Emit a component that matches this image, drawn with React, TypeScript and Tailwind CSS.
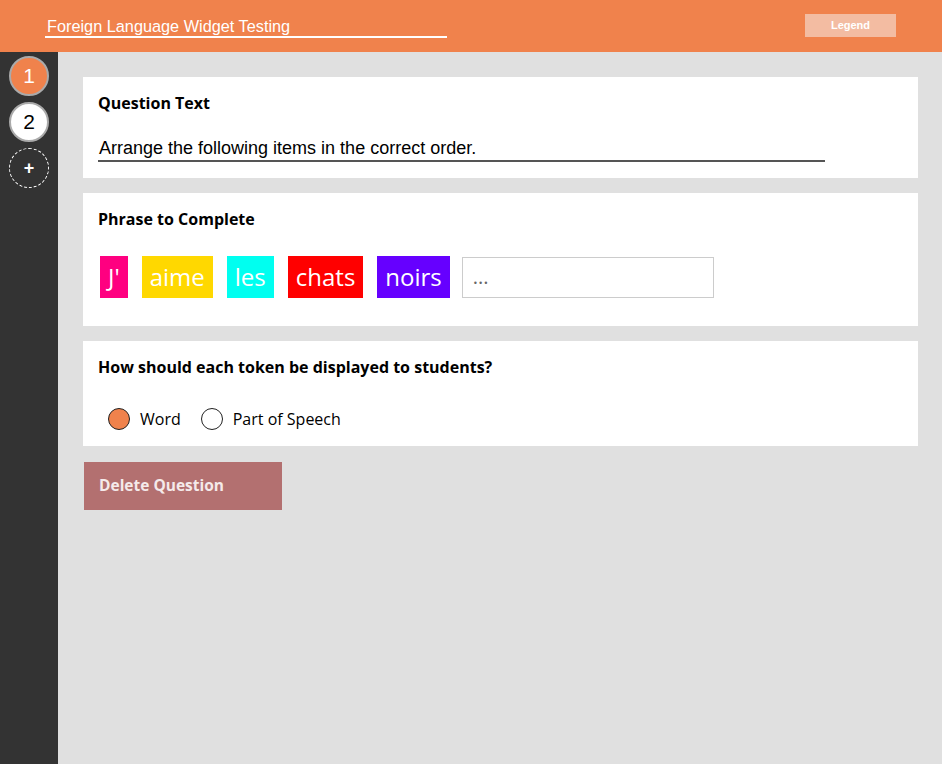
import { useState } from "react";

const TOKENS = [
  { text: "J'", color: "bg-[#ff0080]" },
  { text: "aime", color: "bg-[#ffd800]" },
  { text: "les", color: "bg-[#00fff0]" },
  { text: "chats", color: "bg-[#ff0000]" },
  { text: "noirs", color: "bg-[#6600ff]" },
];

const OPTIONS = ["Word", "Part of Speech"];

export default function App() {
  const [active, setActive] = useState(1);
  const [display, setDisplay] = useState("Word");

  return (
    <div className="flex flex-col h-[764px] bg-[#e0e0e0] font-['Open_Sans',sans-serif]">
      {/* Header */}
      <header className="flex items-center justify-between h-[52px] bg-[#f0824c] pl-[45px] pr-[46px] shrink-0">
        <div className="w-[402px] h-[22px] border-b-2 border-white mt-[1px] font-['Liberation_Sans',Arial,sans-serif] text-[16.3px] leading-[20px] text-white pl-[2px]">
          Foreign Language Widget Testing
        </div>
        <button className="w-[91px] h-[23px] bg-[#f3bca2] text-white text-[11px] font-bold font-['Liberation_Sans',Arial,sans-serif] mt-[-1px]">
          Legend
        </button>
      </header>

      <div className="flex flex-1">
        {/* Sidebar */}
        <aside className="w-[58px] bg-[#333333] flex flex-col items-center gap-[6px] pt-[4px] shrink-0">
          {[1, 2].map((n) => (
            <button
              key={n}
              onClick={() => setActive(n)}
              className={`w-[40px] h-[40px] rounded-full border-2 border-[#aaaaaa] flex items-center justify-center text-[21px] font-['Liberation_Sans',Arial,sans-serif] ${
                active === n ? "bg-[#f0824c] text-white" : "bg-white text-black"
              }`}
            >
              {n}
            </button>
          ))}
          <button className="w-[40px] h-[40px] rounded-full border border-dashed border-white flex items-center justify-center text-white text-[18px] font-bold font-['Liberation_Sans',Arial,sans-serif]">
            +
          </button>
        </aside>

        {/* Main */}
        <main className="flex-1 pl-[25px] pr-[24px] pt-[25px] flex flex-col gap-[15px]">
          <section className="bg-white px-[15px] pt-[15px] pb-[16px]">
            <h2 className="text-[16px] leading-[22px] font-bold text-black">Question Text</h2>
            <div className="mt-[23px] w-[727px] border-b-2 border-[#555555] font-['Liberation_Sans',Arial,sans-serif] text-[18px] leading-[22px] text-black pl-[1px] pb-[1px]">
              Arrange the following items in the correct order.
            </div>
          </section>

          <section className="bg-white px-[15px] pt-[15px] pb-[28px]">
            <h2 className="text-[16px] leading-[22px] font-bold text-black">Phrase to Complete</h2>
            <div className="mt-[26px] flex items-center gap-[14px] pl-[2px]">
              {TOKENS.map((t) => (
                <span
                  key={t.text}
                  className={`${t.color} h-[42px] px-[8px] flex items-center text-white text-[24px] leading-none`}
                >
                  {t.text}
                </span>
              ))}
              <div className="w-[252px] h-[41px] border border-[#cccccc] flex items-center pl-[10px] text-[20px] text-[#666666] ml-[-2px]">
                ...
              </div>
            </div>
          </section>

          <section className="bg-white px-[15px] pt-[15px] pb-[16px]">
            <h2 className="text-[16px] leading-[22px] font-bold text-black">
              How should each token be displayed to students?
            </h2>
            <div className="mt-[30px] flex items-center gap-[20px] pl-[10px]">
              {OPTIONS.map((o) => (
                <label key={o} className="flex items-center gap-[10px] cursor-pointer" onClick={() => setDisplay(o)}>
                  <span
                    className={`w-[22px] h-[22px] rounded-full border border-[#222222] ${
                      display === o ? "bg-[#f0824c]" : "bg-white"
                    }`}
                  />
                  <span className="text-[16px] leading-[22px] text-black">{o}</span>
                </label>
              ))}
            </div>
          </section>

          <button className="self-start ml-[1px] mt-[1px] w-[198px] h-[48px] bg-[#b37070] text-[#f5eaea] text-[15.5px] font-bold text-left pl-[15px]">
            Delete Question
          </button>
        </main>
      </div>
    </div>
  );
}
